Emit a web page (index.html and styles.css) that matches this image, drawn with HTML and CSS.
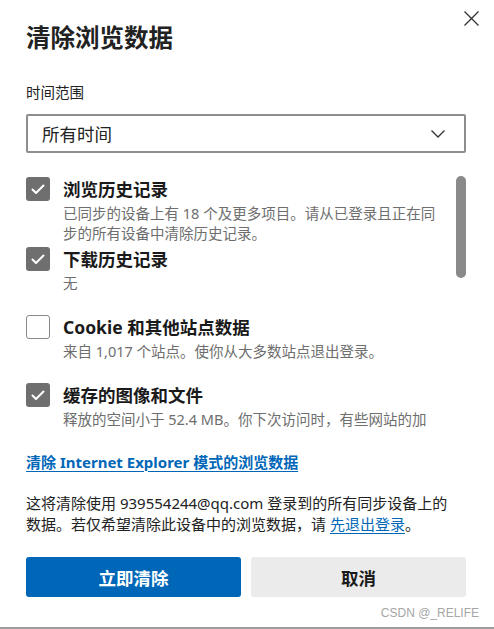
FILE: index.html
```html
<!DOCTYPE html>
<html lang="zh-CN">
<head>
<meta charset="utf-8">
<title>清除浏览数据</title>
<link rel="stylesheet" href="styles.css">
</head>
<body>
<div class="dialog">
  <button class="close" aria-label="关闭">
    <svg width="15" height="15" viewBox="0 0 15 15"><path d="M0.5 0.5 L14.5 14.5 M14.5 0.5 L0.5 14.5" stroke="#333" stroke-width="1.3" fill="none"/></svg>
  </button>
  <h1 class="title">清除浏览数据</h1>
  <div class="field-label">时间范围</div>
  <div class="select">
    <span class="select-value">所有时间</span>
    <svg class="chevron" width="14" height="8" viewBox="0 0 14 8"><path d="M0.5 0.5 L7 7 L13.5 0.5" stroke="#333" stroke-width="1.3" fill="none"/></svg>
  </div>
  <div class="scroll">
    <div class="items">
      <div class="item item-tight">
        <span class="box checked"><svg width="24" height="24" viewBox="0 0 24 24"><path d="M6.5 12.5 L10 16 L17.5 8.5" stroke="#fff" stroke-width="2" fill="none" stroke-linecap="round" stroke-linejoin="round"/></svg></span>
        <div class="item-text">
          <div class="item-label">浏览历史记录</div>
          <div class="item-desc">已同步的设备上有 18 个及更多项目。请从已登录且正在同步的所有设备中清除历史记录。</div>
        </div>
      </div>
      <div class="item">
        <span class="box checked"><svg width="24" height="24" viewBox="0 0 24 24"><path d="M6.5 12.5 L10 16 L17.5 8.5" stroke="#fff" stroke-width="2" fill="none" stroke-linecap="round" stroke-linejoin="round"/></svg></span>
        <div class="item-text">
          <div class="item-label">下载历史记录</div>
          <div class="item-desc">无</div>
        </div>
      </div>
      <div class="item">
        <span class="box"></span>
        <div class="item-text">
          <div class="item-label">Cookie 和其他站点数据</div>
          <div class="item-desc">来自 1,017 个站点。使你从大多数站点退出登录。</div>
        </div>
      </div>
      <div class="item">
        <span class="box checked"><svg width="24" height="24" viewBox="0 0 24 24"><path d="M6.5 12.5 L10 16 L17.5 8.5" stroke="#fff" stroke-width="2" fill="none" stroke-linecap="round" stroke-linejoin="round"/></svg></span>
        <div class="item-text">
          <div class="item-label">缓存的图像和文件</div>
          <div class="item-desc">释放的空间小于 52.4 MB。你下次访问时，有些网站的加</div>
        </div>
      </div>
    </div>
    <div class="scrollbar"></div>
  </div>
  <a class="ie-link" href="#">清除 Internet Explorer 模式的浏览数据</a>
  <p class="note">这将清除使用 939554244@qq.com 登录到的所有同步设备上的<br>数据。若仅希望清除此设备中的浏览数据，请 <a class="inline-link" href="#">先退出登录</a>。</p>
  <div class="actions">
    <button class="btn btn-primary">立即清除</button>
    <button class="btn btn-secondary">取消</button>
  </div>
  <div class="watermark">CSDN @_RELIFE</div>
</div>
</body>
</html>
```
FILE: styles.css
```css
* { box-sizing: border-box; }
html, body { margin: 0; padding: 0; background: #fff; }
body {
  font-family: "Noto Sans", "Noto Sans CJK SC", sans-serif;
  color: #1a1a1a;
}
.dialog {
  position: relative;
  width: 494px;
  height: 629px;
  padding: 22px 28px 0 26px;
  border-bottom: 2px solid #9c9c9c;
  display: flex;
  flex-direction: column;
}
.close {
  position: absolute;
  top: 11px;
  left: 464px;
  width: 15px;
  height: 15px;
  padding: 0;
  border: 0;
  background: none;
  display: block;
}
.close svg { display: block; }
.title {
  margin: 0;
  font-size: 24.5px;
  line-height: 32px;
  font-weight: 700;
  color: #222;
}
.field-label {
  margin-top: 28px;
  font-size: 14.5px;
  line-height: 20px;
  color: #222;
}
.select {
  margin-top: 12px;
  height: 39px;
  border: 2px solid #8d8d8d;
  border-radius: 2px;
  display: flex;
  align-items: center;
  justify-content: space-between;
  padding: 0 19px 0 14px;
}
.select-value {
  font-size: 17.5px;
  line-height: 24px;
  color: #222;
}
.chevron { display: block; margin-top: 1px; }
.scroll {
  position: relative;
  margin-top: 23px;
  height: 254px;
  overflow: hidden;
}
.items {
  display: flex;
  flex-direction: column;
  padding-right: 20px;
}
.item {
  display: flex;
  gap: 13px;
  margin-bottom: 21px;
}
.item-tight { margin-bottom: 3px; }
.box {
  flex: none;
  width: 24px;
  height: 24px;
  margin-top: 1px;
  border: 1px solid #8a8a8a;
  border-radius: 3px;
  background: #fff;
}
.box.checked {
  border: 0;
  background: #6f6f6f;
}
.box svg { display: block; }
.item-text { flex: 1; min-width: 0; }
.item-label {
  font-size: 17.5px;
  line-height: 26px;
  font-weight: 700;
  color: #1a1a1a;
}
.item-desc {
  margin-top: 1px;
  font-size: 14.5px;
  line-height: 20px;
  color: #6e6e6e;
}
.scrollbar {
  position: absolute;
  top: 0;
  right: 0;
  width: 10px;
  height: 102px;
  border-radius: 5px;
  background: #8a8a8a;
}
.ie-link {
  margin-top: 22px;
  align-self: flex-start;
  font-size: 15px;
  line-height: 20px;
  font-weight: 700;
  color: #0067b8;
  text-decoration: underline;
  text-underline-offset: 3px;
  text-decoration-thickness: 1px;
}
.note {
  margin: 21px 0 0;
  font-size: 15px;
  line-height: 21px;
  color: #222;
}
.inline-link {
  color: #0067b8;
  text-decoration: underline;
  text-underline-offset: 3px;
  text-decoration-thickness: 1px;
}
.actions {
  margin-top: 22px;
  display: flex;
  gap: 10px;
}
.btn {
  flex: 1;
  height: 40px;
  border: 0;
  border-radius: 3px;
  font-family: "Noto Sans", "Noto Sans CJK SC", sans-serif;
  font-size: 17.5px;
  font-weight: 700;
  padding: 0;
}
.btn-primary { background: #0067b8; color: #fff; }
.btn-secondary { background: #ebebeb; color: #1a1a1a; }
.watermark {
  position: absolute;
  right: 15px;
  top: 604px;
  font-family: "Liberation Sans", Arial, sans-serif;
  font-size: 12px;
  line-height: 18px;
  color: #a6a6a6;
}
```
